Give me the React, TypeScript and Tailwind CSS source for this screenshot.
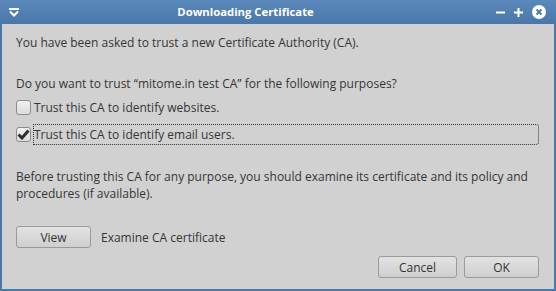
const font = { fontFamily: '"Open Sans", "Noto Sans", sans-serif' };

const Button = ({ label, className = "" }: { label: string; className?: string }) => (
  <button
    className={`h-[22px] rounded-[3px] border border-[#9a9a9a] bg-gradient-to-b from-[#e2e2e2] to-[#cfcfcf] text-[12px] text-[#333] ${className}`}
  >
    {label}
  </button>
);

const TitleBar = () => (
  <div className="flex h-6 items-center bg-gradient-to-b from-[#5b89bb] to-[#4a77a8] px-2 text-white">
    <svg width="10" height="9" viewBox="0 0 10 9" className="ml-[1px]">
      <rect x="0" y="0" width="10" height="2" fill="white" />
      <path d="M1 3.5 L5 7.5 L9 3.5" stroke="white" strokeWidth="2" fill="none" />
    </svg>
    <div className="flex-1 pr-[24px] text-center text-[11.3px] font-bold">Downloading Certificate</div>
    <div className="flex items-center gap-[9px] pr-[2px]">
      <svg width="9" height="9" viewBox="0 0 9 9">
        <rect x="0" y="3.5" width="9" height="2" fill="white" />
      </svg>
      <svg width="9" height="9" viewBox="0 0 9 9">
        <rect x="0" y="3.5" width="9" height="2" fill="white" />
        <rect x="3.5" y="0" width="2" height="9" fill="white" />
      </svg>
      <svg width="14" height="14" viewBox="0 0 14 14">
        <circle cx="7" cy="7" r="7" fill="white" />
        <path d="M4.5 4.5 L9.5 9.5 M9.5 4.5 L4.5 9.5" stroke="#4f7cae" strokeWidth="2" />
      </svg>
    </div>
  </div>
);

const CheckRow = ({ label, checked, focused }: { label: string; checked?: boolean; focused?: boolean }) => (
  <div className="flex items-center">
    <span className="flex h-[15px] w-[15px] items-center justify-center rounded-[3px] border border-[#8c8c8c] bg-gradient-to-b from-[#f0f0f0] to-[#dcdcdc]">
      {checked && (
        <svg width="13" height="11" viewBox="0 0 13 11">
          <path d="M1.5 5.5 L5 9 L11.5 1.5" stroke="#2e2e2e" strokeWidth="3" fill="none" />
        </svg>
      )}
    </span>
    <span
      className={`ml-[2px] flex-1 py-[1px] ${focused ? "rounded-tr-[3px] rounded-br-[3px] border border-dotted border-[#333]" : "border border-transparent"}`}
    >
      {label}
    </span>
  </div>
);

export default function App() {
  return (
    <div className="flex h-[291px] w-[556px] flex-col bg-[#4b78aa]" style={font}>
      <TitleBar />
      <div className="mx-[2px] mb-[2px] flex flex-1 flex-col bg-[#d1d1d1] px-[14px] text-[12px] leading-[17px] text-[#353535]">
        <p className="mt-[10px]">You have been asked to trust a new Certificate Authority (CA).</p>
        <p className="mt-[24px]">Do you want to trust “mitome.in test CA” for the following purposes?</p>
        <div className="mt-[5px] mr-[1px] flex flex-col gap-[6px]">
          <CheckRow label="Trust this CA to identify websites." />
          <CheckRow label="Trust this CA to identify email users." checked focused />
        </div>
        <p className="mt-[23px]">
          Before trusting this CA for any purpose, you should examine its certificate and its policy and procedures (if available).
        </p>
        <div className="mt-[24px] flex items-center gap-[10px]">
          <Button label="View" className="w-[75px]" />
          <span>Examine CA certificate</span>
        </div>
        <div className="mt-[8px] flex justify-end gap-[7px] pr-[1px]">
          <Button label="Cancel" className="w-[79px]" />
          <Button label="OK" className="w-[75px]" />
        </div>
      </div>
    </div>
  );
}
